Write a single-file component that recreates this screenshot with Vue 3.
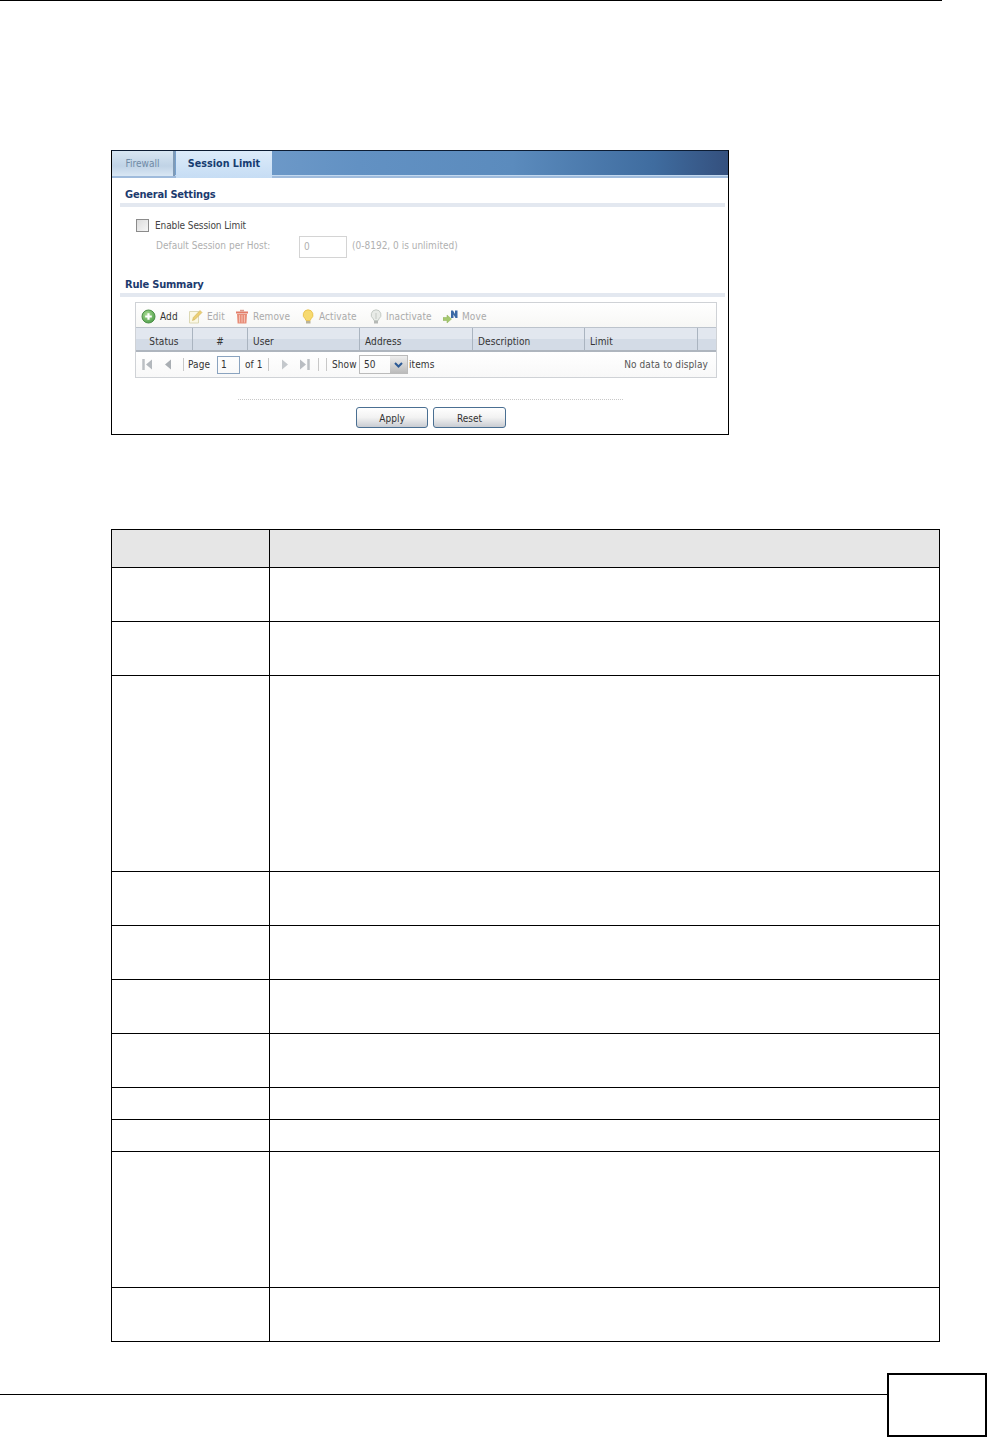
<script setup>
const rows = [38, 54, 54, 196, 54, 54, 54, 54, 32, 32, 136, 54]
const columns = [
  { name: 'Status', width: 57 },
  { name: '#', width: 55 },
  { name: 'User', width: 112 },
  { name: 'Address', width: 113 },
  { name: 'Description', width: 112 },
  { name: 'Limit', width: 113 },
  { name: '', width: 18 }
]
</script>

<template>
  <div class="page">
    <div class="top-rule"></div>

    <section class="shot">
      <div class="tabbar">
        <div class="tab">Firewall</div>
        <div class="tab active">Session Limit</div>
      </div>
      <div class="shot-body">
        <h3 class="section-title">General Settings</h3>
        <div class="section-rule"></div>
        <label class="check-row">
          <span class="checkbox"></span>
          <span>Enable Session Limit</span>
        </label>
        <div class="host-row">
          <span class="host-label">Default Session per Host:</span>
          <span class="host-input">0</span>
          <span>(0-8192, 0 is unlimited)</span>
        </div>

        <h3 class="section-title second">Rule Summary</h3>
        <div class="section-rule"></div>

        <div class="grid">
          <div class="toolbar">
            <span class="tool t-add">
              <svg width="15" height="15" viewBox="0 0 15 15"><defs><radialGradient id="ga" cx=".4" cy=".35" r=".7"><stop offset="0" stop-color="#a9dc92"/><stop offset="1" stop-color="#4f9f4a"/></radialGradient></defs><circle cx="7.500" cy="7.500" r="6.500" fill="url(#ga)" stroke="#4b8f46"/><path d="M7.500 4.200v6.600M4.200 7.500h6.600" stroke="#fff" stroke-width="2.200"/></svg>
              Add
            </span>
            <span class="tool t-edit">
              <svg width="15" height="15" viewBox="0 0 15 15"><path d="M1.500 2.500h9v11.500h-9z" fill="#fbf8e4" stroke="#dcd8b4"/><path d="M4.500 11.500l.8-3L12 1.500l2 2-7 7z" fill="#eccf72" stroke="#cfb15a" stroke-width=".6"/></svg>
              Edit
            </span>
            <span class="tool t-remove">
              <svg width="14" height="15" viewBox="0 0 14 15"><path d="M1 2.500h12v2H1z" fill="#e27c68"/><path d="M5 .8h4v1.700H5z" fill="#dc9a8c"/><path d="M2 5h10l-.6 9.500H2.600z" fill="#e88d78"/><path d="M4.500 6v7.500M7 6v7.500M9.500 6v7.500" stroke="#f3c0b3"/></svg>
              Remove
            </span>
            <span class="tool t-activate">
              <svg width="13" height="15" viewBox="0 0 13 15"><path d="M6 .8a5 5 0 0 1 3 9l-.8 1.700H4l-.8-1.700a5 5 0 0 1 2.800-9z" fill="#f7da70" stroke="#e6bd45" stroke-width=".8"/><path d="M4 12h4.500v2.500H4z" fill="#b9b39a"/></svg>
              Activate
            </span>
            <span class="tool t-inactivate">
              <svg width="12" height="15" viewBox="0 0 12 15"><path d="M6 .8a5 5 0 0 1 3 9l-.8 1.700H4l-.8-1.700a5 5 0 0 1 2.800-9z" fill="#e8ebe7" stroke="#b9c0ba" stroke-width=".8"/><path d="M6 4v6" stroke="#c4c9c4"/><path d="M4 12h4v2.500H4z" fill="#b5b8b5"/></svg>
              Inactivate
            </span>
            <span class="tool t-move">
              <svg width="15" height="15" viewBox="0 0 15 15"><path d="M0 8.500h4V6l4.500 4L4 14v-2.500H0z" fill="#a5c96e" stroke="#8cae58" stroke-width=".5"/><path d="M8 9V1.500h2l2 3.500V1.500h2.500V9h-2l-2-3.500V9z" fill="#3a69a6"/></svg>
              Move
            </span>
          </div>

          <div class="grid-head">
            <div v-for="col in columns" :key="col.name" class="head-cell" :style="{ width: col.width + 'px' }">{{ col.name }}</div>
          </div>

          <div class="pager">
            <svg class="p-first" width="11" height="13" viewBox="0 0 11 13"><path d="M1.500 1v11" stroke="#bcc0c4" stroke-width="2.500"/><path d="M10 1.500v10L4 6.500z" fill="#b3b8bd"/></svg>
            <svg class="p-prev" width="6" height="13" viewBox="0 0 6 13"><path d="M6 1.500v10L0 6.500z" fill="#a9aeb3"/></svg>
            <span class="pg-sep s-a"></span>
            <span class="p-page">Page</span>
            <span class="page-input">1</span>
            <span class="p-of">of 1</span>
            <span class="pg-sep s-b"></span>
            <svg class="p-next" width="6" height="13" viewBox="0 0 6 13"><path d="M0 1.500v10l6-5z" fill="#c4c8cc"/></svg>
            <svg class="p-last" width="10" height="13" viewBox="0 0 10 13"><path d="M0 1.500v10l6-5z" fill="#b9bdc2"/><path d="M8.500 1v11" stroke="#bcc0c4" stroke-width="2.500"/></svg>
            <span class="pg-sep s-c"></span>
            <span class="pg-sep s-d"></span>
            <span class="p-show">Show</span>
            <span class="select"><span class="select-val">50</span><span class="select-btn"><svg width="9" height="6" viewBox="0 0 9 6"><path d="M1 1l3.500 3.500L8 1" fill="none" stroke="#2c5a95" stroke-width="2"/></svg></span></span>
            <span class="p-items">items</span>
            <span class="no-data">No data to display</span>
          </div>
        </div>

        <div class="dotted"></div>
        <div class="buttons">
          <button class="btn">Apply</button>
          <button class="btn wide">Reset</button>
        </div>
      </div>
    </section>

    <div class="doc-table">
      <div v-for="(h, i) in rows" :key="i" class="doc-row" :class="{ header: i === 0 }" :style="{ height: h + 'px' }">
        <div class="doc-left"></div>
        <div class="doc-right"></div>
      </div>
    </div>

    <footer class="foot">
      <div class="foot-rule"></div>
      <div class="foot-box"></div>
    </footer>
  </div>
</template>

<style>
html, body { margin: 0; background: #fff; }
</style>

<style scoped>
.page { width: 987px; height: 1438px; background: #fff; overflow: hidden; font-family: "DejaVu Sans Condensed", "DejaVu Sans", sans-serif; font-stretch: condensed; }
.top-rule { width: 942px; height: 1px; background: #000; }

.shot { box-sizing: border-box; width: 618px; height: 285px; margin: 149px 0 0 111px; border: 1px solid #000; border-top-color: #0c1c33; font-size: 10px; color: #333; background: #fff; }
.tabbar { display: flex; height: 25px; background: linear-gradient(90deg, #7fa6d0 0%, #6291c3 40%, #5b8bbd 65%, #3f6c9f 88%, #34507e 100%); border-bottom: 2px solid #9fbbdc; box-shadow: inset 0 -1px 0 #c4daf0; box-sizing: content-box; }
.tab { height: 25px; line-height: 25px; text-align: center; }
.tab:first-child { width: 61px; margin-right: 1px; color: #6f8aa5; background: linear-gradient(#d8e6f2, #c0d3e6 60%, #d9e7f4); border-right: 2px solid #7f9ab6; }
.tab.active { width: 96px; height: 27px; line-height: 25px; font-size: 10.7px; font-weight: bold; color: #173c70; background: linear-gradient(#dcebfa, #c6ddf4); }
.shot-body { padding: 10px 3px 0 8px; }
.section-title { margin: 0 0 0 5px; font-size: 11px; line-height: 14px; font-weight: bold; letter-spacing: -.2px; color: #1c3a6e; }
.section-title.second { margin: 20px 0 0 5px; }
.section-rule { height: 4px; margin-top: 1px; background: #e3e8f0; }
.check-row { display: flex; align-items: center; gap: 6px; height: 15px; margin: 11px 0 0 16px; letter-spacing: -.1px; color: #444; }
.checkbox { box-sizing: border-box; width: 13px; height: 13px; border: 1px solid #8b8b8b; background: linear-gradient(135deg, #dcdcdc, #f6f6f6); }
.host-row { display: flex; align-items: center; height: 22px; margin: 3px 0 0 36px; line-height: 20px; color: #b0b0b0; }
.host-row > span:not(.host-input) { margin-bottom: 2px; }
.host-label { width: 143px; }
.host-input { box-sizing: border-box; width: 48px; height: 22px; line-height: 19px; padding-left: 4px; margin-right: 5px; border: 1px solid #d4d4d4; }

.grid { box-sizing: border-box; width: 582px; height: 76px; margin: 5px 0 0 15px; border: 1px solid #cfd2d6; letter-spacing: .1px; }
.toolbar { box-sizing: border-box; display: flex; align-items: center; height: 24px; padding: 3px 0 0 5px; background: linear-gradient(#fff, #f7f7f5); color: #aaa; }
.tool { display: flex; align-items: center; gap: 4px; flex: none; }
.t-add { width: 47px; color: #333; }
.t-edit { width: 47px; }
.t-remove { width: 67px; }
.t-activate { width: 68px; }
.t-inactivate { width: 73px; }
.grid-head { display: flex; height: 25px; background: linear-gradient(#e2e7ef 0 50%, #d3dbe6 50% 100%); border-top: 1px solid #bcc3cc; border-bottom: 2px solid #aeb5be; box-sizing: border-box; }
.head-cell { box-sizing: border-box; line-height: 27px; padding-left: 5px; border-right: 1px solid #aab4c0; color: #333; flex: none; }
.head-cell:first-child, .head-cell:nth-child(2) { text-align: center; padding-left: 0; }
.head-cell:last-child { border-right: 0; }
.pager { display: flex; align-items: center; height: 25px; padding: 0 8px 0 6px; color: #333; background: linear-gradient(#fff, #f8f8f8); white-space: nowrap; }
.pager > * { flex: none; }
.pg-sep { width: 1px; height: 13px; background: #c8c8c8; }
.p-prev { margin-left: 12px; }
.s-a { margin-left: 12px; }
.p-page { margin-left: 4px; width: 24px; }
.page-input { box-sizing: border-box; margin-left: 5px; width: 23px; height: 18px; line-height: 16px; padding-left: 3px; border: 1px solid #8aa3bf; }
.p-of { margin-left: 5px; width: 17px; }
.s-b { margin-left: 6px; }
.p-next { margin-left: 13px; }
.p-last { margin-left: 12px; }
.s-c { margin-left: 8px; }
.s-d { margin-left: 7px; }
.p-show { margin-left: 5px; width: 26px; }
.select { display: flex; box-sizing: border-box; margin-left: 1px; width: 49px; height: 19px; border: 1px solid #bbb; }
.select-val { flex: 1; line-height: 17px; padding-left: 4px; }
.select-btn { display: flex; align-items: center; justify-content: center; width: 17px; background: linear-gradient(#eee, #bbb); }
.p-items { margin-left: 1px; }
.pager .no-data { margin-left: auto; color: #555; }
.dotted { width: 385px; margin: 21px 0 0 118px; border-top: 1px dotted #c8c8c8; }
.buttons { display: flex; gap: 5px; margin: 7px 0 0 236px; }
.btn { box-sizing: border-box; width: 72px; height: 21px; padding: 2px 0 0; border: 1px solid #4a6f92; border-radius: 3px; font: 10px "DejaVu Sans Condensed", "DejaVu Sans", sans-serif; font-stretch: condensed; color: #333; background: linear-gradient(#fff 0%, #f2f2f2 50%, #c9ccd2 100%); }
.btn.wide { width: 73px; }

.doc-table { box-sizing: border-box; width: 829px; margin: 94px 0 0 111px; border: 1px solid #000; border-bottom: 0; }
.doc-row { box-sizing: border-box; display: flex; border-bottom: 1px solid #000; }
.doc-row.header { background: #e6e6e6; }
.doc-left { width: 157px; border-right: 1px solid #000; }
.doc-right { flex: 1; }

.foot { display: flex; align-items: flex-start; margin-top: 31px; }
.foot-rule { width: 887px; height: 1px; margin-top: 21px; background: #000; }
.foot-box { box-sizing: border-box; width: 100px; height: 64px; border: 2px solid #000; }
</style>
